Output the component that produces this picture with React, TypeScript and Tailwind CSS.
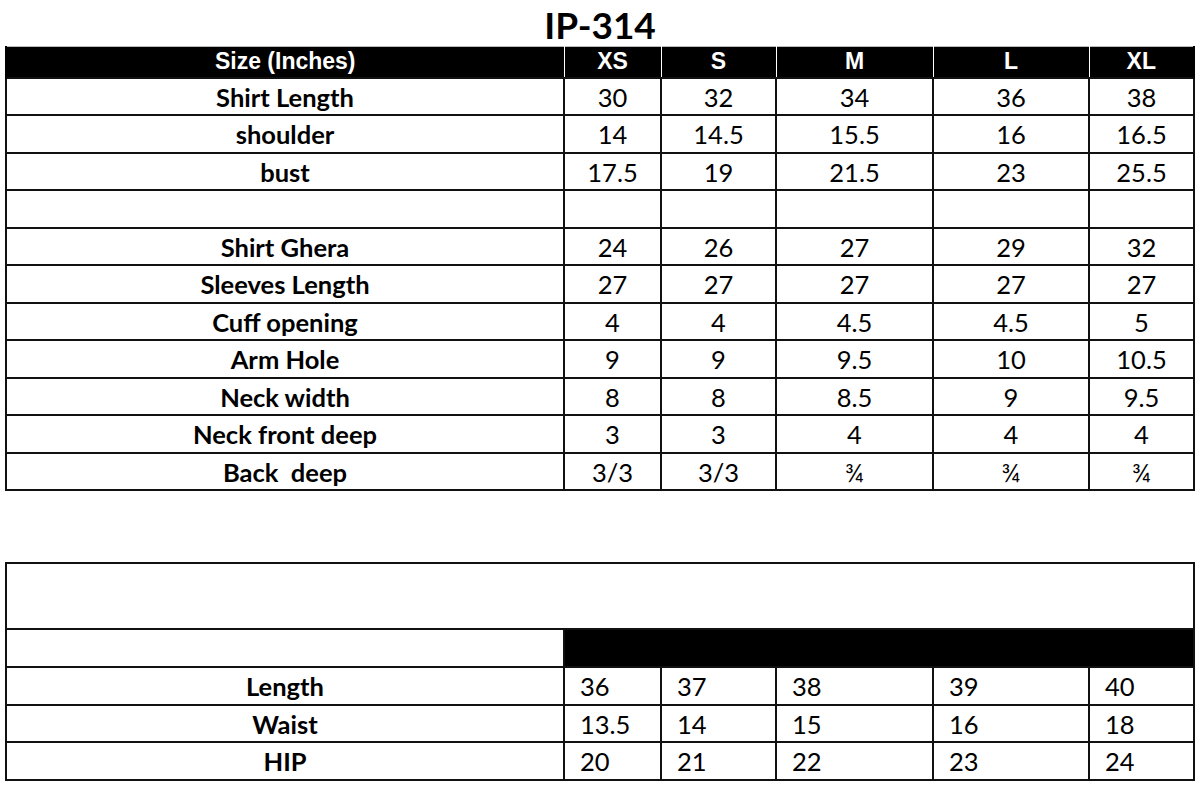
const sizes = ["XS", "S", "M", "L", "XL"];

const topRows: [string, string[]][] = [
  ["Shirt Length", ["30", "32", "34", "36", "38"]],
  ["shoulder", ["14", "14.5", "15.5", "16", "16.5"]],
  ["bust", ["17.5", "19", "21.5", "23", "25.5"]],
  ["", ["", "", "", "", ""]],
  ["Shirt Ghera", ["24", "26", "27", "29", "32"]],
  ["Sleeves Length", ["27", "27", "27", "27", "27"]],
  ["Cuff opening", ["4", "4", "4.5", "4.5", "5"]],
  ["Arm Hole", ["9", "9", "9.5", "10", "10.5"]],
  ["Neck width", ["8", "8", "8.5", "9", "9.5"]],
  ["Neck front deep", ["3", "3", "4", "4", "4"]],
  ["Back\u00a0 deep", ["3/3", "3/3", "¾", "¾", "¾"]],
];

const bottomRows: [string, string[]][] = [
  ["Length", ["36", "37", "38", "39", "40"]],
  ["Waist", ["13.5", "14", "15", "16", "18"]],
  ["HIP", ["20", "21", "22", "23", "24"]],
];

const Cols = () => (
  <colgroup>
    <col className="w-[558px]" />
    <col className="w-[97px]" />
    <col className="w-[115px]" />
    <col className="w-[157px]" />
    <col className="w-[156px]" />
    <col className="w-[105px]" />
  </colgroup>
);

export default function App() {
  return (
    <div className="w-[1200px] h-[790px] bg-white text-black font-['Lato','Open_Sans',sans-serif] overflow-hidden">
      <h1 className="h-[46px] flex items-center justify-center text-[37px] font-bold leading-none pt-[2px]">
        IP-314
      </h1>

      <table className="ml-[5px] w-[1188px] table-fixed border-collapse">
        <Cols />
        <thead>
          <tr className="h-[31px] bg-black text-white font-['Liberation_Sans',Arial,sans-serif] text-[23px] font-bold leading-none">
            <th className="border-l-2 border-l-black border-r border-r-white border-t border-t-[#bbb]">
              Size (Inches)
            </th>
            {sizes.map((s, i) => (
              <th
                key={s}
                className={`border-t border-t-[#bbb] border-l border-l-white ${
                  i === sizes.length - 1 ? "border-r-2 border-r-black" : "border-r border-r-white"
                }`}
              >
                {s}
              </th>
            ))}
          </tr>
        </thead>
        <tbody>
          {topRows.map(([label, vals], r) => (
            <tr key={r} className="h-[37.5px] text-[25.5px] leading-none">
              <td className="border-2 border-[#111] text-center font-bold pt-[2px]">{label}</td>
              {vals.map((v, i) => (
                <td key={i} className="border-2 border-[#111] text-center pt-[2px]">
                  {v}
                </td>
              ))}
            </tr>
          ))}
        </tbody>
      </table>

      <table className="ml-[5px] mt-[71px] w-[1188px] table-fixed border-collapse">
        <Cols />
        <tbody>
          <tr className="h-[66px]">
            <td colSpan={6} className="border-2 border-[#111]"></td>
          </tr>
          <tr className="h-[38px]">
            <td className="border-2 border-[#111]"></td>
            <td colSpan={5} className="border-2 border-[#111] bg-black"></td>
          </tr>
          {bottomRows.map(([label, vals], r) => (
            <tr key={r} className="h-[37.7px] text-[25.5px] leading-none">
              <td className="border-2 border-[#111] text-center font-bold pt-[2px]">{label}</td>
              {vals.map((v, i) => (
                <td key={i} className="border-2 border-[#111] text-left pl-[15px] pt-[2px]">
                  {v}
                </td>
              ))}
            </tr>
          ))}
        </tbody>
      </table>
    </div>
  );
}
